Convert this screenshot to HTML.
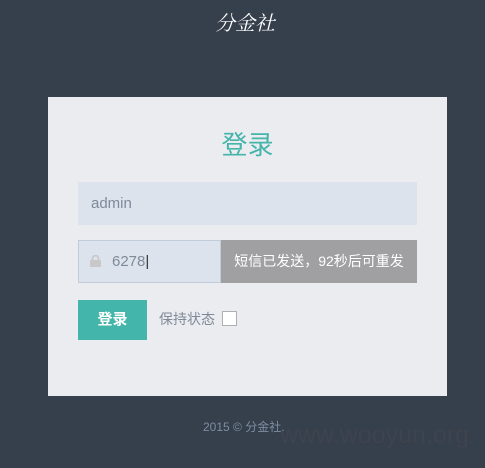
<!DOCTYPE html>
<html><head><meta charset="utf-8"><style>
*{margin:0;padding:0;box-sizing:border-box}
body{width:485px;height:468px;background:#363f4c;font-family:"Liberation Sans","Noto Sans CJK SC",sans-serif;position:relative;overflow:hidden}
.logo{position:absolute;left:215px;top:7px;color:#fff;font-family:"Noto Serif CJK SC",serif;font-size:20px;font-style:italic;letter-spacing:0px}
.box{position:absolute;left:48px;top:97px;width:399px;height:299px;background:#ebecf0}
.title{position:absolute;left:0;width:100%;top:28px;text-align:center;color:#44b5aa;font-size:26px}
.in1{position:absolute;left:30px;top:85px;width:339px;height:43px;background:#dce3ec;color:#7f8a99;font-size:15px;padding:13px 13px}
.in2{position:absolute;left:30px;top:143px;width:143px;height:43px;background:#dce3ec;border:1px solid #c1ccdb;color:#7f8a99;font-size:15px;padding:12px 0 0 33px}
.lock{position:absolute;left:11px;top:14px;width:11px;height:12px}
.sms{position:absolute;left:173px;top:143px;width:196px;height:43px;background:#a0a0a2;color:#fff;font-size:14px;text-align:center;line-height:43px}
.btn{position:absolute;left:30px;top:203px;width:69px;height:40px;background:#44b5aa;color:#fff;font-weight:bold;font-size:15px;text-align:center;line-height:40px}
.keep{position:absolute;left:111px;top:212px;color:#7f8a99;font-size:14px}
.cb{position:absolute;left:174px;top:214px;width:15px;height:15px;background:#fff;border:1px solid #b0b0b0}
.foot{position:absolute;left:203px;top:418px;color:#7f8da1;font-size:12px}
.wm{position:absolute;left:280px;top:421px;color:#3e444e;font-size:25px}
</style></head><body>
<div class="logo">分金社</div>
<div class="box">
<div class="title">登录</div>
<div class="in1">admin</div>
<div class="in2"><svg class="lock" viewBox="0 0 11 12"><path d="M2.5 5V3.5a3 3 0 0 1 6 0V5" stroke="#c8c8c8" stroke-width="1.8" fill="none"/><rect x="0" y="5" width="11" height="7" fill="#c8c8c8"/></svg>6278<span style="color:#333">|</span></div>
<div class="sms">短信已发送，92秒后可重发</div>
<div class="btn">登录</div>
<div class="keep">保持状态</div>
<div class="cb"></div>
</div>
<div class="wm">www.wooyun.org</div>
<div class="foot">2015 © 分金社.</div>
</body></html>
